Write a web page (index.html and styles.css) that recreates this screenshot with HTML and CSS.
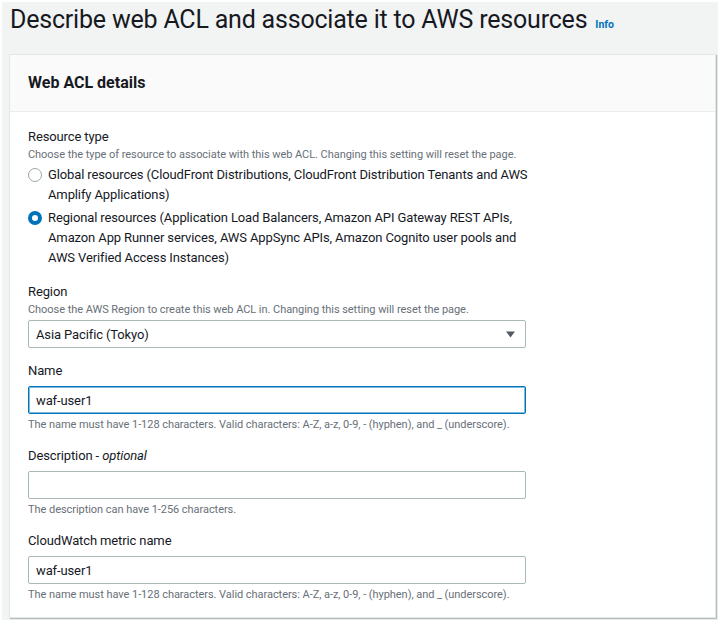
FILE: index.html
```html
<!DOCTYPE html>
<html lang="en">
<head>
<meta charset="utf-8">
<title>Describe web ACL</title>
<link rel="stylesheet" href="styles.css">
</head>
<body>
<div class="page">
  <header class="page-header">
    <h1 class="page-title">Describe web ACL and associate it to AWS resources</h1>
    <a class="info-link" href="#">Info</a>
  </header>

  <section class="card">
    <div class="card-header">
      <h2 class="card-title">Web ACL details</h2>
    </div>
    <div class="card-body">
      <div class="field field-radio">
        <div class="label">Resource type</div>
        <div class="desc">Choose the type of resource to associate with this web ACL. Changing this setting will reset the page.</div>
        <div class="radio-group">
          <label class="radio">
            <span class="radio-mark"></span>
            <span class="radio-text">Global resources (CloudFront Distributions, CloudFront Distribution Tenants and AWS Amplify Applications)</span>
          </label>
          <label class="radio">
            <span class="radio-mark checked"></span>
            <span class="radio-text">Regional resources (Application Load Balancers, Amazon API Gateway REST APIs, Amazon App Runner services, AWS AppSync APIs, Amazon Cognito user pools and AWS Verified Access Instances)</span>
          </label>
        </div>
      </div>

      <div class="field">
        <div class="label">Region</div>
        <div class="desc desc-select">Choose the AWS Region to create this web ACL in. Changing this setting will reset the page.</div>
        <div class="control select">
          <span class="value">Asia Pacific (Tokyo)</span>
          <svg class="caret" width="9" height="7" viewBox="0 0 9 7"><path d="M0 0.5 H9 L4.5 6.5 Z" fill="#545b64"/></svg>
        </div>
      </div>

      <div class="field">
        <div class="label label-tight">Name</div>
        <div class="control focused"><span class="value">waf-user1</span></div>
        <div class="hint">The name must have 1-128 characters. Valid characters: A-Z, a-z, 0-9, - (hyphen), and _ (underscore).</div>
      </div>

      <div class="field">
        <div class="label label-tight">Description - <i>optional</i></div>
        <div class="control"><span class="value"></span></div>
        <div class="hint">The description can have 1-256 characters.</div>
      </div>

      <div class="field">
        <div class="label label-tight">CloudWatch metric name</div>
        <div class="control"><span class="value">waf-user1</span></div>
        <div class="hint">The name must have 1-128 characters. Valid characters: A-Z, a-z, 0-9, - (hyphen), and _ (underscore).</div>
      </div>
    </div>
  </section>
</div>
</body>
</html>
```

FILE: styles.css
```css
html {
  background: #ffffff;
}
body {
  margin: 0;
  padding: 2px 0 0 2px;
  font-family: Roboto, "Liberation Sans", sans-serif;
  color: #16191f;
}
.page {
  background: #f2f3f3;
  height: 618px;
  overflow: hidden;
}
.page-header {
  display: flex;
  align-items: baseline;
  padding: 0 0 0 8px;
  height: 52px;
}
.page-title {
  margin: 0;
  font-size: 25px;
  letter-spacing: -0.2px;
  font-weight: 400;
  line-height: 36px;
  color: #16191f;
}
.info-link {
  margin-left: 8px;
  font-size: 10.5px;
  font-weight: 700;
  color: #0073bb;
  text-decoration: none;
}
.card {
  margin-left: 7px;
  width: 707px;
  height: 564px;
  background: #ffffff;
  border: 1px solid #e4e7e7;
  box-shadow: 1px 1px 1px rgba(0, 28, 36, 0.25);
  box-sizing: border-box;
}
.card-header {
  height: 57px;
  background: #fafafa;
  border-bottom: 1px solid #eaeded;
  box-sizing: border-box;
  display: flex;
  align-items: center;
  padding-left: 18px;
}
.card-title {
  margin: 0;
  font-size: 16px;
  font-weight: 700;
  line-height: 20px;
}
.card-body {
  padding: 15px 18px 16px 18px;
  width: 498px;
  display: flex;
  flex-direction: column;
  gap: 13px;
  font-size: 13px;
  letter-spacing: -0.12px;
}
.field {
  display: flex;
  flex-direction: column;
}
.field-radio {
  padding-bottom: 1px;
}
.label {
  font-size: 13px;
  line-height: 20px;
  color: #16191f;
}
.label-tight {
  margin-bottom: 5px;
}
.desc {
  font-size: 11px;
  letter-spacing: -0.05px;
  line-height: 16px;
  color: #687078;
  margin-bottom: 3px;
}
.desc-select {
  margin-bottom: 2px;
}
.hint {
  font-size: 11px;
  letter-spacing: -0.05px;
  line-height: 16px;
  color: #687078;
  margin-top: 3px;
}
.radio-group {
  display: flex;
  flex-direction: column;
  gap: 3px;
  margin-top: -1px;
  margin-right: -6px;
}
.radio {
  display: flex;
  align-items: flex-start;
  gap: 6px;
  font-size: 13px;
  line-height: 20px;
}
.radio-mark {
  flex: none;
  width: 14px;
  height: 14px;
  margin-top: 3px;
  border: 1.5px solid #9ba7a8;
  border-radius: 50%;
  box-sizing: border-box;
  background: #fff;
}
.radio-mark.checked {
  border: 4px solid #0073bb;
}
.radio-text {
  flex: 1;
}
.control {
  height: 28px;
  border: 1px solid #aab7b8;
  border-radius: 2px;
  box-sizing: border-box;
  display: flex;
  align-items: center;
  padding: 0 10px 0 7px;
  font-size: 13px;
  background: #fff;
}
.control .value {
  flex: 1;
}
.control.focused {
  border-color: #0073bb;
  box-shadow: inset 0 0 0 1px rgba(0, 115, 187, 0.5);
}
.caret {
  flex: none;
}
```
